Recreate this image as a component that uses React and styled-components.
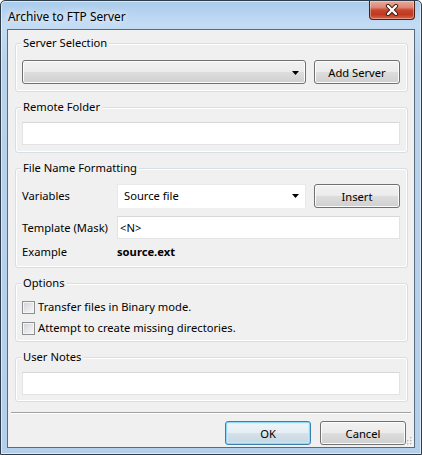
import React from "react";
import styled, { createGlobalStyle, css } from "styled-components";

const Global = createGlobalStyle`
  html, body { margin: 0; padding: 0; background: #ffffff; }
  body {
    font-family: "Noto Sans", "DejaVu Sans", sans-serif;
    font-size: 11.2px;
    color: #000;
  }
  * { box-sizing: border-box; }
`;

const Window = styled.div`
  position: relative;
  width: 422px;
  height: 455px;
  border: 1px solid #2f3c49;
  border-radius: 5px 5px 0 0;
  background: linear-gradient(180deg, #a9cbeb 0px, #c3dcf4 24px, #b8d2ec 60px, #b4cfea 100%);
  box-shadow: inset 0 0 0 1px rgba(255, 255, 255, 0.55);
  padding: 0 6px 6px 6px;
  display: flex;
  flex-direction: column;
`;

const TitleBar = styled.div`
  height: 28px;
  flex: none;
  display: flex;
  justify-content: space-between;
  align-items: flex-start;
  padding-left: 1px;
`;

const Title = styled.span`
  margin-top: 7px;
  line-height: 16px;
  font-size: 11.9px;
  color: #000;
  white-space: nowrap;
  text-shadow: 0 0 6px rgba(255, 255, 255, 0.95), 0 0 10px rgba(255, 255, 255, 0.8);
`;

const CloseButton = styled.div`
  width: 46px;
  height: 19px;
  border: 1px solid #4d1d14;
  border-top: none;
  border-radius: 0 0 4px 4px;
  background: linear-gradient(180deg, #e9a899 0%, #dd8a76 35%, #c8472f 50%, #c0391f 75%, #d9684a 100%);
  box-shadow: inset 0 0 0 1px rgba(255, 255, 255, 0.35);
  display: flex;
  align-items: center;
  justify-content: center;
`;

const Client = styled.div`
  position: relative;
  flex: 1;
  border: 1px solid #5a6b7d;
  background: #f0f0f0;
  padding: 5px 6px 0 7px;
  display: flex;
  flex-direction: column;
`;

const Groups = styled.div`
  display: flex;
  flex-direction: column;
  gap: 7px;
`;

const Group = styled.fieldset`
  margin: 0;
  min-width: 0;
  border: 1px solid #d5dfe5;
  border-radius: 3px;
  box-shadow: inset 0 0 0 1px #ffffff;
  padding: ${(p) => p.$pt}px 7px ${(p) => p.$pb}px 6px;
`;

const Legend = styled.legend`
  margin-left: -1px;
  padding: 0 2px;
  line-height: 16px;
  background: #f0f0f0;
  white-space: nowrap;
`;

const FieldRow = styled.div`
  display: flex;
  align-items: center;
  gap: 8px;
  margin-top: ${(p) => p.$mt || 0}px;
`;

const FieldLabel = styled.span`
  width: 87px;
  flex: none;
  line-height: 16px;
  white-space: nowrap;
`;

const Value = styled.span`
  font-weight: bold;
  line-height: 16px;
`;

const Combo = styled.div`
  flex: 1;
  height: 24px;
  display: flex;
  align-items: center;
  justify-content: space-between;
  padding: 0 6px 0 6px;
  border-radius: 3px;
  ${(p) =>
    p.$flat
      ? css`
          background: #ffffff;
          border: 1px solid #e8e8e8;
          border-bottom-color: #ffffff;
          border-radius: 0;
        `
      : css`
          border: 1px solid #707070;
          background: linear-gradient(180deg, #f2f2f2 0%, #ebebeb 50%, #dddddd 51%, #cfcfcf 100%);
          box-shadow: inset 0 0 0 1px #fcfcfc;
        `}
`;

const Arrow = () => (
  <svg width="7" height="4" viewBox="0 0 7 4" style={{ marginTop: 1 }}>
    <polygon points="0,0 7,0 3.5,4" fill="#000" />
  </svg>
);

const Button = styled.button`
  flex: none;
  width: 86px;
  height: 24px;
  padding: 0;
  margin: 0;
  font: inherit;
  color: #000;
  border: 1px solid #707070;
  border-radius: 3px;
  background: linear-gradient(180deg, #f2f2f2 0%, #ebebeb 50%, #dddddd 51%, #cfcfcf 100%);
  box-shadow: inset 0 0 0 1px #fcfcfc;
  ${(p) =>
    p.$default &&
    css`
      border-color: #3c7fb1;
      box-shadow: inset 0 0 0 1px #8fd8f5, inset 0 0 0 2px rgba(200, 238, 252, 0.6);
      background: linear-gradient(180deg, #eef5f9 0%, #e4eef4 50%, #d4e2ea 51%, #c6d6df 100%);
    `}
  ${(p) =>
    p.$shift &&
    css`
      margin-top: ${p.$shift}px;
    `}
`;

const TextBox = styled.input`
  flex: 1;
  min-width: 0;
  width: 100%;
  height: 23px;
  margin: 0;
  padding: 0 2px;
  font: inherit;
  color: #000;
  background: #ffffff;
  border: 1px solid #e2e3e6;
  border-top-color: #d6d7da;
  outline: none;
`;

const CheckList = styled.div`
  display: flex;
  flex-direction: column;
  gap: 5px;
`;

const CheckRow = styled.label`
  display: flex;
  align-items: center;
  gap: 3px;
  line-height: 16px;
  white-space: nowrap;
`;

const Box = styled.span`
  width: 13px;
  height: 13px;
  flex: none;
  border: 1px solid #8e8f8f;
  background: linear-gradient(135deg, #cfd2d6 0%, #e9eaec 60%, #f7f7f7 100%);
  box-shadow: inset 0 0 0 1px #f4f4f4;
`;

const Separator = styled.div`
  height: 0;
  margin: 10px -3px 0 -4px;
  border-top: 1px solid #a0a0a0;
  border-bottom: 1px solid #ffffff;
`;

const Footer = styled.div`
  display: flex;
  justify-content: flex-end;
  gap: 9px;
  margin: 7px 2px 0 0;
`;

const Grip = styled.svg`
  position: absolute;
  right: 1px;
  bottom: 1px;
`;

const CloseGlyph = () => (
  <svg width="14" height="12" viewBox="0 0 14 12">
    <path d="M3 2 L11 10 M11 2 L3 10" stroke="#3b1a12" strokeWidth="4.2" strokeLinecap="round" />
    <path d="M3 2 L11 10 M11 2 L3 10" stroke="#ffffff" strokeWidth="2.4" strokeLinecap="round" />
  </svg>
);

const GripDots = () => {
  const pts = [
    [8, 2],
    [5, 5],
    [8, 5],
    [2, 8],
    [5, 8],
    [8, 8],
  ];
  return (
    <Grip width="11" height="11" viewBox="0 0 11 11">
      {pts.map(([x, y], i) => (
        <g key={i}>
          <rect x={x + 1} y={y + 1} width="1.5" height="1.5" fill="#ffffff" />
          <rect x={x} y={y} width="1.5" height="1.5" fill="#b6b9bd" />
        </g>
      ))}
    </Grip>
  );
};

export default function App() {
  return (
    <>
      <Global />
      <Window>
        <TitleBar>
          <Title>Archive to FTP Server</Title>
          <CloseButton>
            <CloseGlyph />
          </CloseButton>
        </TitleBar>
        <Client>
          <Groups>
            <Group $pt={9} $pb={7}>
              <Legend>Server Selection</Legend>
              <FieldRow>
                <Combo>
                  <span />
                  <Arrow />
                </Combo>
                <Button>Add Server</Button>
              </FieldRow>
            </Group>

            <Group $pt={7} $pb={7}>
              <Legend>Remote Folder</Legend>
              <FieldRow>
                <TextBox readOnly defaultValue="" />
              </FieldRow>
            </Group>

            <Group $pt={7} $pb={7}>
              <Legend>File Name Formatting</Legend>
              <FieldRow>
                <FieldLabel>Variables</FieldLabel>
                <Combo $flat>
                  <span>Source file</span>
                  <Arrow />
                </Combo>
                <Button $shift={1}>Insert</Button>
              </FieldRow>
              <FieldRow $mt={8}>
                <FieldLabel>Template (Mask)</FieldLabel>
                <TextBox readOnly defaultValue="<N>" />
              </FieldRow>
              <FieldRow $mt={5}>
                <FieldLabel>Example</FieldLabel>
                <Value>source.ext</Value>
              </FieldRow>
            </Group>

            <Group $pt={8} $pb={5}>
              <Legend>Options</Legend>
              <CheckList>
                <CheckRow>
                  <Box />
                  Transfer files in Binary mode.
                </CheckRow>
                <CheckRow>
                  <Box />
                  Attempt to create missing directories.
                </CheckRow>
              </CheckList>
            </Group>

            <Group $pt={7} $pb={6}>
              <Legend>User Notes</Legend>
              <FieldRow>
                <TextBox readOnly defaultValue="" />
              </FieldRow>
            </Group>
          </Groups>

          <Separator />
          <Footer>
            <Button $default>OK</Button>
            <Button>Cancel</Button>
          </Footer>
          <GripDots />
        </Client>
      </Window>
    </>
  );
}
